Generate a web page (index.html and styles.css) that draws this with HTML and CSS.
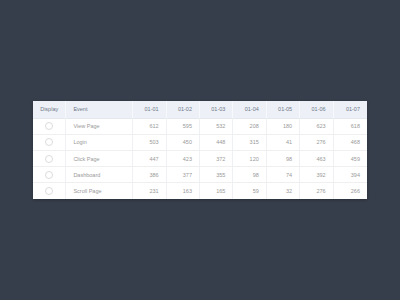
FILE: index.html
```html
<!DOCTYPE html>
<html>
<head>
<meta charset="utf-8">
<link rel="stylesheet" href="styles.css">
</head>
<body>
<div class="grid">
  <div class="h c">Display</div><div class="h l">Event</div>
  <div class="h r">01-01</div><div class="h r">01-02</div><div class="h r">01-03</div><div class="h r">01-04</div><div class="h r">01-05</div><div class="h r">01-06</div><div class="h r">01-07</div>

  <div class="d c"><span class="radio"></span></div><div class="d l">View Page</div>
  <div class="d r">612</div><div class="d r">595</div><div class="d r">532</div><div class="d r">208</div><div class="d r">180</div><div class="d r">623</div><div class="d r">618</div>

  <div class="d c"><span class="radio"></span></div><div class="d l">Login</div>
  <div class="d r">503</div><div class="d r">450</div><div class="d r">448</div><div class="d r">315</div><div class="d r">41</div><div class="d r">276</div><div class="d r">468</div>

  <div class="d c"><span class="radio"></span></div><div class="d l">Click Page</div>
  <div class="d r">447</div><div class="d r">423</div><div class="d r">372</div><div class="d r">120</div><div class="d r">98</div><div class="d r">463</div><div class="d r">459</div>

  <div class="d c"><span class="radio"></span></div><div class="d l">Dashboard</div>
  <div class="d r">386</div><div class="d r">377</div><div class="d r">355</div><div class="d r">98</div><div class="d r">74</div><div class="d r">392</div><div class="d r">394</div>

  <div class="d c last"><span class="radio"></span></div><div class="d l last">Scroll Page</div>
  <div class="d r last">231</div><div class="d r last">163</div><div class="d r last">165</div><div class="d r last">59</div><div class="d r last">32</div><div class="d r last">276</div><div class="d r last">266</div>
</div>
</body>
</html>
```
FILE: styles.css
```css
html, body {
  margin: 0;
  height: 100%;
}
body {
  background: #373e4b;
  display: flex;
  align-items: center;
  justify-content: center;
  font-family: "Liberation Sans", Arial, sans-serif;
}
.grid {
  width: 334px;
  display: grid;
  grid-template-columns: 1fr 2fr repeat(7, 1fr);
  grid-template-rows: 18px repeat(5, 16.2px);
  background: #fff;
  box-shadow: 0 1px 3px rgba(0, 0, 0, 0.25);
}
.h, .d {
  box-sizing: border-box;
  display: flex;
  align-items: center;
  font-size: 5.5px;
  white-space: nowrap;
  border-right: 1px solid #eef0f3;
}
.h {
  background: #edf1f7;
  color: #6f7888;
  border-right-color: #f6f8fb;
  border-bottom: 1px solid #e3e8ef;
}
.d {
  color: #9a9a9a;
  border-bottom: 1px solid #efefef;
}
.d.last {
  border-bottom: none;
}
.h:nth-child(9n), .d:nth-child(9n) {
  border-right: none;
}
.c { justify-content: center; }
.l { padding-left: 7px; }
.r { justify-content: flex-end; padding-right: 7px; }
.radio {
  width: 6px;
  height: 6px;
  border: 0.8px solid #dcdcdc;
  border-radius: 50%;
}
```
